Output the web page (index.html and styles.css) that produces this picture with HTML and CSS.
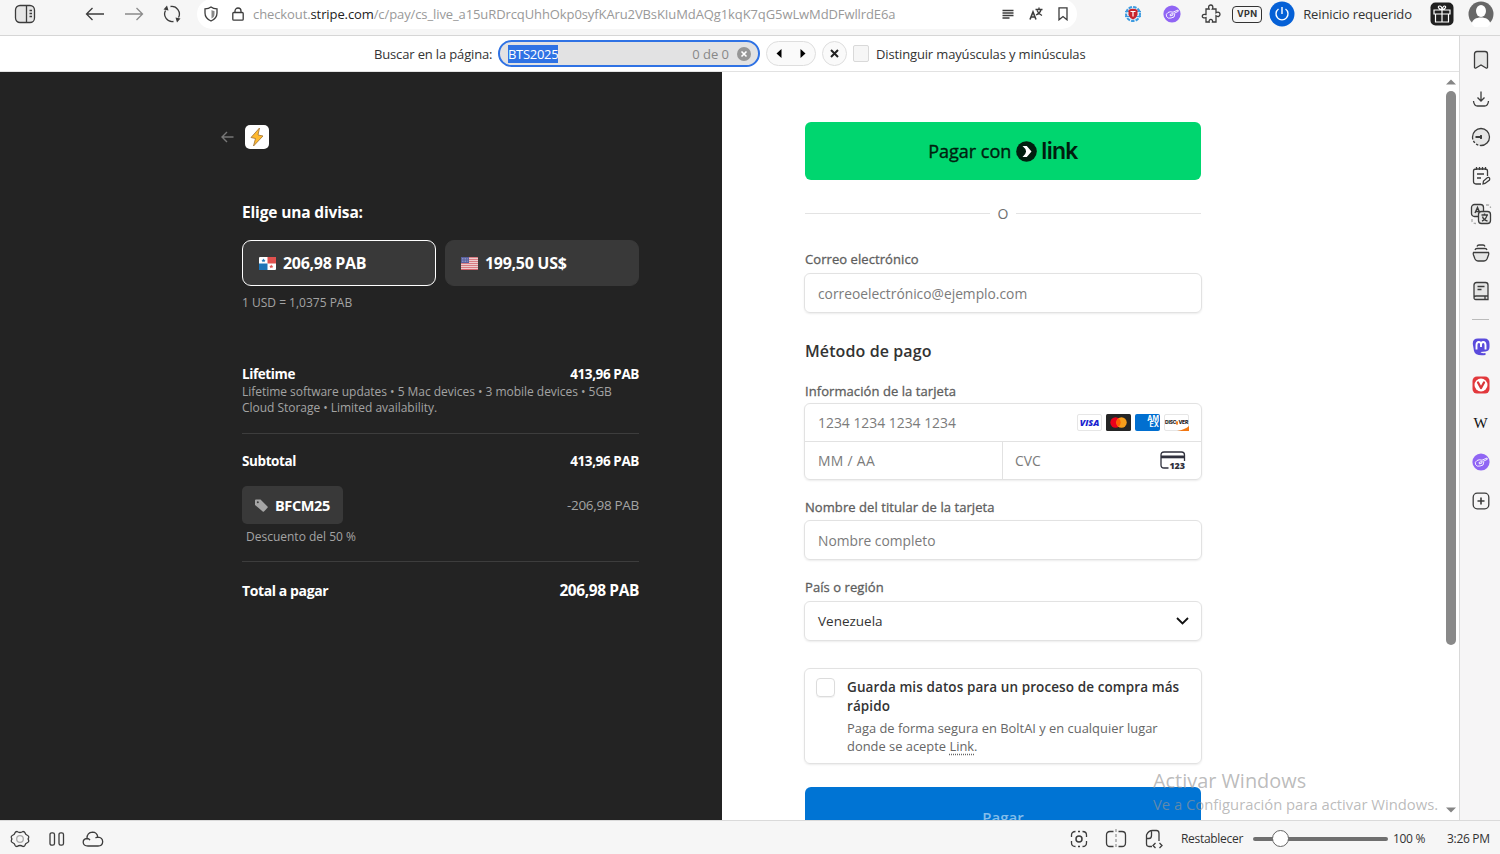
FILE: index.html
```html
<!DOCTYPE html>
<html lang="es">
<head>
    <meta charset="utf-8">
    <title>Checkout</title>
    <link rel="stylesheet" href="styles.css">
</head>
<body>
    <div class="toolbar">
        <svg class="ic panel-ic" width="22" height="20" viewBox="0 0 22 20"><rect class="tint" x="1.500" y="1.500" width="19" height="17" rx="4.500"/><path d="M12.500 2v16M15.500 6.500h2.500M15.500 9.500h2.500M15.500 12.500h2.500"/></svg>
        <svg class="ic back-ic" width="20" height="16" viewBox="0 0 20 16"><path d="M19 8H1.500M7.500 2L1.500 8l6 6"/></svg>
        <svg class="ic forward-ic" width="20" height="16" viewBox="0 0 20 16"><path d="M1 8h17.500M12.500 2l6 6-6 6"/></svg>
        <svg class="ic reload-ic" width="18" height="18" viewBox="0 0 18 18"><path d="M7.500 1.500A7.600 7.600 0 0 1 15.500 12.500M10.500 16.500A7.600 7.600 0 0 1 2.500 5.500"/><path class="fill" d="M12.500 12.500l1.500 5 3.500-4zM5.500 5.500L4 .5.5 4.500z"/></svg>
        <div class="address">
            <svg class="ic" width="14" height="16" viewBox="0 0 14 16"><path d="M1 2.800C3.500 2.800 5.500 2.200 7 1c1.500 1.200 3.500 1.800 6 1.800V7c0 4-2.500 6.500-6 8C3.500 13.500 1 11 1 7z"/><path class="shade" d="M7.500 4c1 .6 2 .9 3 1v3c0 2.500-1.300 3.700-3 4.600z"/></svg>
            <svg class="ic lock-ic" width="12" height="14" viewBox="0 0 12 14"><rect x=".8" y="5.500" width="10.400" height="7.700" rx="1"/><path d="M3 5.500V4a3 3 0 0 1 6 0v1.500"/></svg>
            <span class="url">checkout.<b>stripe.com</b>/c/pay/cs_live_a15uRDrcqUhhOkp0syfKAru2VBsKIuMdAQg1kqK7qG5wLwMdDFwllrdE6a</span>
            <svg class="ic reader-ic" width="12" height="10" viewBox="0 0 12 10"><path d="M.5 1.500h11M.5 4h11M.5 6.500h11M.5 9h7"/></svg>
            <svg class="ic" width="14" height="14" viewBox="0 0 14 14"><path d="M1 12.500L4 5l3 7.500M2 10h4" stroke-width="1.600"/><path d="M6.500 2.500h7M10 .5v2M12 2.500C11.500 5 9.500 7 7 8M8 3.500c.8 2 2.500 3.800 5 5"/></svg>
            <svg class="ic" width="10" height="14" viewBox="0 0 10 14"><path d="M1 .8h8v12L5 9.500L1 12.800z"/></svg>
        </div>
        <svg class="globe-ic" width="18" height="18" viewBox="0 0 18 18"><circle cx="9" cy="9" r="7" fill="#d9ecfb" stroke="#3d9be0" stroke-width="2" stroke-dasharray="3.500 1.200"/><path d="M1 6.500h16M1 11.500h16" stroke="#3d9be0"/><path d="M4.500 5Q9 2.500 13.500 5v5Q12 13.500 9 14.500 6 13.500 4.500 10z" fill="#c9252d"/><path d="M6.500 6.500h5M9 6.500v5" stroke="#fff" stroke-width="1.200"/></svg>
        <svg class="hand-ic" width="18" height="18" viewBox="0 0 18 18"><circle cx="9" cy="9" r="8.600" fill="#9065f4"/><path d="M15 5l-5 2.200q-3-1-5 .3Q2.500 9 3.500 11.500q1.500 2.500 4.500 1.500l3-1 .8-3M15 5l.3 1.300-5 2.500M7 9.500l2.500-1 .5 1.500-2.500 1z" fill="none" stroke="#fff" stroke-width=".9"/></svg>
        <svg class="ic puzzle-ic" width="20" height="20" viewBox="0 0 20 20"><path d="M5 5h3.200C6.800 2.700 8 1 9.700 1s3 1.700 1.600 4H15v3.800c2.200-1.500 4-.3 4 1.500s-1.800 3-4 1.500V18h-3.500c1-3.500-4.300-3.500-3.300 0H5v-4.300c-5 1.500-5-4.500 0-3.200z"/></svg>
        <span class="vpn">VPN</span>
        <svg class="power-ic" width="26" height="26" viewBox="0 0 26 26"><circle cx="13" cy="13" r="12.500" fill="#0560d6"/><path d="M9.500 8a6 6 0 1 0 7 0M13 6v7" fill="none" stroke="#fff" stroke-width="1.400"/></svg>
        <span class="restart">Reinicio requerido</span>
        <svg class="gift-ic" width="24" height="24" viewBox="0 0 24 24"><rect x=".5" y=".5" width="23" height="23" rx="5" fill="#202020"/><path d="M4 8h16v4H4zM5.500 12h13v8h-13zM12 8v12M12 7.500C8 7.500 7.500 4 9.500 4S12 6 12 7.500s.5-3.500 2.500-3.500S16 7.500 12 7.500" fill="none" stroke="#fff" stroke-width="1.200"/></svg>
        <svg class="avatar-ic" width="26" height="26" viewBox="0 0 26 26"><circle cx="13" cy="13" r="12.500" fill="#686868"/><path d="M3.500 23c1-4.500 4.500-6.500 9.500-6.500s8.500 2 9.500 6.500l-3 3h-13z" fill="#fff"/><ellipse cx="13" cy="10" rx="5" ry="6" fill="#fff"/></svg>
    </div>

    <div class="middle">
        <div class="window">
            <div class="findbar">
                <span class="find-label">Buscar en la página:</span>
                <div class="find-input">
                    <span class="selected">BTS2025</span>
                    <span class="count">0 de 0</span>
                    <svg width="14" height="14" viewBox="0 0 14 14"><circle cx="7" cy="7" r="7" fill="#969696"/><path d="M4.500 4.500l5 5M9.500 4.500l-5 5" stroke="#fff" stroke-width="1.600"/></svg>
                </div>
                <div class="find-nav">
                    <svg width="6" height="9" viewBox="0 0 6 9"><path d="M5.500 0v9L.5 4.500z"/></svg>
                    <svg width="6" height="9" viewBox="0 0 6 9"><path d="M.5 0v9l5-4.500z"/></svg>
                </div>
                <div class="find-close">
                    <svg width="9" height="9" viewBox="0 0 9 9"><path d="M1 1l7 7M8 1L1 8" stroke="#222" stroke-width="2"/></svg>
                </div>
                <span class="find-check"></span>
                <span class="find-case">Distinguir mayúsculas y minúsculas</span>
            </div>

            <div class="page">
                <div class="summary">
                    <div class="merchant">
                        <svg width="13" height="12" viewBox="0 0 13 12"><path d="M12.500 6H1M6 1L1 6l5 5" fill="none" stroke="#777" stroke-width="1.400"/></svg>
                        <span class="logo"><svg width="16" height="20" viewBox="0 0 16 20"><path d="M10.500 1L2 10.500l4.500 1L4.500 19L14 9l-5-1z" fill="#ffb92e" stroke="#a77b3c" stroke-width=".9"/></svg></span>
                    </div>
                    <h2 class="choose">Elige una divisa:</h2>
                    <div class="currencies">
                        <div class="currency active">
                            <svg width="17" height="13" viewBox="0 0 17 13"><rect width="17" height="13" rx="1" fill="#fff"/><path d="M8.500 0H17v6.500H8.500z" fill="#e0514e"/><path d="M0 6.500h8.500V13H0z" fill="#1d74b7"/><path d="M4.500 1.500l.6 1.300 1.400.1-1 1 .3 1.400-1.300-.7-1.300.7.300-1.400-1-1 1.400-.1z" fill="#1d74b7"/><path d="M12.300 7.500l.6 1.300 1.400.1-1 1 .3 1.400-1.300-.7-1.300.7.300-1.400-1-1 1.400-.1z" fill="#e0514e"/></svg>
                            206,98 PAB
                        </div>
                        <div class="currency">
                            <svg width="17" height="13" viewBox="0 0 17 13"><rect width="17" height="13" rx="1" fill="#f3e5e5"/><path d="M0 .7h17M0 2.700h17M0 4.700h17M0 6.700h17M0 8.700h17M0 10.700h17M0 12.500h17" stroke="#d2636c"/><path d="M0 0h8v6H0z" fill="#59609f"/><path d="M1 1.500h6.500M1 3h6.500M1 4.500h6.500" stroke="#b5b8d8" stroke-width=".7" stroke-dasharray=".8 .8"/></svg>
                            199,50 US$
                        </div>
                    </div>
                    <p class="rate">1 USD = 1,0375 PAB</p>

                    <div class="line lifetime"><span>Lifetime</span><span>413,96 PAB</span></div>
                    <p class="desc">Lifetime software updates • 5 Mac devices • 3 mobile devices • 5GB<br>Cloud Storage • Limited availability.</p>
                    <div class="line subtotal"><span>Subtotal</span><span>413,96 PAB</span></div>
                    <div class="line coupon">
                        <span class="tag">
                            <svg width="13" height="13" viewBox="0 0 13 13"><path d="M0 1.500Q0 .5 1 .5h4.500L12.500 7.500q.6.700 0 1.300L9 12.400q-.7.500-1.300 0L0 6z" fill="#a5a5a5"/><circle cx="2.800" cy="3.200" r="1" fill="#3a3a3a"/></svg>
                            BFCM25
                        </span>
                        <span class="minus">-206,98 PAB</span>
                    </div>
                    <p class="discount">Descuento del 50 %</p>
                    <div class="line total"><span>Total a pagar</span><span class="amount">206,98 PAB</span></div>
                </div>

                <div class="payment">
                    <div class="form">
                        <div class="link-button">
                            <span class="pay-with">Pagar con</span>
                            <svg width="21" height="21" viewBox="0 0 21 21"><circle cx="10.500" cy="10.500" r="10.300" fill="#011e0f"/><path d="M6.500 5h4.300l4.700 5.500-4.700 5.500H6.500q3.300-2.500 3.600-5.500Q9.800 7.500 6.500 5z" fill="#fff"/></svg>
                            <span class="link-word">link</span>
                        </div>
                        <div class="or"><span>O</span></div>
                        <label class="label">Correo electrónico</label>
                        <div class="field">correoelectrónico@ejemplo.com</div>
                        <h2 class="method">Método de pago</h2>
                        <label class="label">Información de la tarjeta</label>
                        <div class="card">
                            <div class="card-number">
                                <span>1234 1234 1234 1234</span>
                                <div class="brands">
                                    <span class="brand visa">VISA</span>
                                    <svg width="25" height="17" viewBox="0 0 25 17"><rect width="25" height="17" rx="1.500" fill="#252525"/><circle cx="9.500" cy="8.500" r="5.200" fill="#eb001b"/><circle cx="15.500" cy="8.500" r="5.200" fill="#f79e1b"/><path d="M12.500 4.300a5.200 5.200 0 0 1 0 8.400 5.200 5.200 0 0 1 0-8.400" fill="#ff5f00"/></svg>
                                    <span class="brand amex"><span>AM</span><span>EX</span></span>
                                    <span class="brand discover">DISC<i></i>VER<svg width="12" height="5" viewBox="0 0 12 5"><path d="M12 0v5H0Q8 3.500 12 0z" fill="#f27712"/></svg></span>
                                </div>
                            </div>
                            <div class="card-row">
                                <div class="expiry">MM / AA</div>
                                <div class="cvc">
                                    CVC
                                    <svg width="26" height="21" viewBox="0 0 26 21"><path d="M8.500 18H4q-3 0-3-3V5q0-3 3-3h17.500q3 0 3 3v6" fill="none" stroke="#30313d" stroke-width="1.300"/><path d="M1 5.500h23.500v2.800H1z" fill="#30313d"/><text class="cvc-digits" x="9.500" y="18.500" textLength="15.500">123</text></svg>
                                </div>
                            </div>
                        </div>
                        <label class="label holder">Nombre del titular de la tarjeta</label>
                        <div class="field">Nombre completo</div>
                        <label class="label country">País o región</label>
                        <div class="field select">
                            Venezuela
                            <svg width="13" height="8" viewBox="0 0 13 8"><path d="M1 1l5.500 5.500L12 1" fill="none" stroke="#111" stroke-width="1.800"/></svg>
                        </div>
                        <div class="save">
                            <span class="checkbox"></span>
                            <div>
                                <p class="save-title">Guarda mis datos para un proceso de compra más<br>rápido</p>
                                <p class="save-text">Paga de forma segura en BoltAI y en cualquier lugar<br>donde se acepte <u>Link</u>.</p>
                            </div>
                        </div>
                        <div class="pay-button">Pagar</div>
                    </div>
                </div>

                <div class="scrollbar">
                    <svg width="10" height="6" viewBox="0 0 10 6"><path d="M0 5.500L5 .5l5 5z"/></svg>
                    <div class="thumb"></div>
                    <svg class="down" width="10" height="6" viewBox="0 0 10 6"><path d="M0 .5l5 5 5-5z"/></svg>
                </div>
            </div>
        </div>

        <div class="sidepanel">
            <svg class="ic" width="20" height="20" viewBox="0 0 20 20"><path class="tint" d="M3.500 4q0-2.500 2.500-2.500h8q2.500 0 2.500 2.500v13.500q-.5 1-1.500.5L10 15l-5 3q-1 .5-1.500-.5z"/></svg>
            <svg class="ic" width="20" height="20" viewBox="0 0 20 20"><path d="M10 2.500v9M6.500 8.500L10 12l3.500-3.500M2.500 12q.5 5 4 5h7q3.500 0 4-5"/></svg>
            <svg class="ic" width="20" height="20" viewBox="0 0 20 20"><circle class="tint-only" cx="10" cy="10" r="8.500"/><path d="M1.500 10A8.500 8.500 0 1 1 10 18.500"/><path d="M1.500 10a8.500 8.500 0 0 0 8.500 8.500" stroke-dasharray="2.500 1.500"/><path d="M4.500 10H11M10 8v4" stroke-width="1.800"/></svg>
            <svg class="ic" width="20" height="20" viewBox="0 0 20 20"><path d="M10 18H5q-2.500 0-2.500-2.500V5Q2.500 3 5 3h9q2.500 0 2.500 2v5M5.500 1v3M8.500 1v3M11.500 1v3M14.500 1v3M6 8h7M6 12h4M12 18l.5-3 4-3.500q1.500-.5 2 .5t0 2L14 17.500z"/></svg>
            <svg class="ic" width="22" height="22" viewBox="0 0 22 22"><rect class="tint" x="1.500" y="1.500" width="12" height="12" rx="3"/><rect class="tint" x="8.500" y="8.500" width="12" height="12" rx="3"/><path d="M5 10L7.500 4.500 9.500 9M6 8.500h3M11.500 12h6.500M14.500 10.500V12M17 12c-.5 3-2.500 5-5 6M12.500 13.500c.5 2 2.500 4 5 4.500" stroke-width="1.400"/><path d="M16 2h2q2.500 0 2.500 3M2 16v2q0 2.500 4 2.500" stroke="#aaa" stroke-dasharray="3 2"/></svg>
            <svg class="ic" width="20" height="20" viewBox="0 0 20 20"><path class="tint" d="M2.500 9.500h15q.5 1 0 2.500l-1.500 4q-1 2-3 2H7q-2 0-3-2l-1.500-4q-.5-1.500 0-2.500z"/><path d="M4 7q.5-1.500 2-1.500h8q1.500 0 2 1.500M6 3.500Q6.500 2 8 2h4q1.500 0 2 1.500"/></svg>
            <svg class="ic" width="20" height="20" viewBox="0 0 20 20"><path class="tint" d="M3 16V4q0-2.500 2.500-2.500h9Q17 1.500 17 4v11H5q-2 0-2 1.800T5 18.500h12V15"/><path d="M6.500 5.500h7M6.500 8.500h4M14 15v3"/></svg>
            <span class="divider"></span>
            <svg width="18" height="18" viewBox="0 0 18 18"><path d="M17.500 6v3q0 4-4 4.500l-5 .5q0 1.500 5 1v2q-10 1.500-11.500-4L.8 6Q.5.500 6 .5h6.500q5 0 5 5.500z" fill="#5b4bdc"/><path d="M4.500 11.500V7q0-3 2.300-3T9 7v2-2q0-3 2.200-3t2.300 3v4.500" fill="none" stroke="#fff" stroke-width="1.900"/></svg>
            <svg width="18" height="18" viewBox="0 0 18 18"><rect x=".5" y=".5" width="17" height="17" rx="4.500" fill="#e2383c"/><circle cx="9" cy="9" r="6.500" fill="#fff"/><path d="M6 6.500L9 12l3-5.500" fill="none" stroke="#d9373b" stroke-width="2.300" stroke-linecap="round" stroke-linejoin="round"/></svg>
            <span class="wiki">W</span>
            <svg width="18" height="18" viewBox="0 0 18 18"><circle cx="9" cy="9" r="8.600" fill="#9065f4"/><path d="M15 5l-5 2.200q-3-1-5 .3Q2.500 9 3.500 11.500q1.500 2.500 4.500 1.500l3-1 .8-3M15 5l.3 1.300-5 2.500M7 9.500l2.500-1 .5 1.500-2.500 1z" fill="none" stroke="#fff" stroke-width=".9"/></svg>
            <svg class="ic" width="18" height="18" viewBox="0 0 18 18"><rect x="1.200" y="1.200" width="15.600" height="15.600" rx="4"/><path d="M9 5.500v7M5.500 9h7" stroke-width="1.600"/></svg>
        </div>
    </div>

    <div class="statusbar">
        <svg class="ic" width="20" height="18" viewBox="0 0 20 18"><path stroke-linejoin="round" d="M7 1.500q1.500 1 3 1t3-1q1.500 0 2 1.300.3 1.700 2.700 2.700 1.300.5 1 2-1.200 1.500 0 3 .3 1.500-1 2-2.400 1-2.700 2.700-.5 1.300-2 1.300-1.500-1-3-1t-3 1q-1.500 0-2-1.300-.3-1.700-2.700-2.700-1.300-.5-1-2 1.200-1.500 0-3-.3-1.500 1-2Q4.700 4.500 5 2.800 5.500 1.500 7 1.500z"/><circle cx="10" cy="9" r="3.300" stroke="#aaa"/></svg>
        <svg class="ic" width="16" height="14" viewBox="0 0 16 14"><rect x="1" y=".8" width="4.500" height="12.400" rx="1.800"/><rect x="10" y=".8" width="4.500" height="12.400" rx="1.800"/></svg>
        <svg class="ic cloud-ic" width="22" height="16" viewBox="0 0 22 16"><path d="M6 15Q1.500 15 1.200 11.500 1 8 5 7.500 5 1.500 10.500 1.200q4.500 0 5.300 5 4.700.3 4.900 4.500Q20.500 15 16 15zM5 7.500q2 0 3 1.700M15.800 6.200q-1.300 0-2.300.8"/></svg>
        <div class="status-right">
            <svg class="ic" width="18" height="18" viewBox="0 0 18 18"><path d="M1.500 7V5q0-3.500 4-3.500M12.500 1.500q4 0 4 3.500v2M16.500 11v2q0 3.500-4 3.500M5.500 16.500q-4 0-4-3.500v-2M8 1.500h2M8 16.500h2"/><circle cx="9" cy="9" r="3" stroke-width="1.500"/></svg>
            <svg class="ic split-ic" width="22" height="22" viewBox="0 0 22 22"><path d="M8.500 3.500H5q-3.500 0-3.500 3.500v8q0 3.500 3.500 3.500h3.500M13.500 3.500H17q3.500 0 3.500 3.500v8q0 3.500-3.500 3.500h-3.500"/><path d="M11 1v20" stroke="#999" stroke-dasharray="3 2"/></svg>
            <svg class="ic" width="18" height="20" viewBox="0 0 18 20"><path d="M7 17.500H4q-2.500 0-2.500-2.500V6q2-4.500 6-4.500h4q2.500 0 2.500 3V12M1.500 9.500H4q2.500 0 2.500-3v-5M10.500 14L8 16.500l2.500 2.500M14.500 14l2.500 2.500-2.500 2.500"/></svg>
            <span class="reset">Restablecer</span>
            <div class="slider"><span class="knob"></span></div>
            <span class="zoom">100 %</span>
            <span class="clock">3:26 PM</span>
        </div>
    </div>

    <div class="watermark">
        <p class="wm-title">Activar Windows</p>
        <p class="wm-text">Ve a Configuración para activar Windows.</p>
    </div>
</body>
</html>
```

FILE: styles.css
```css
* {
    box-sizing: border-box;
}
body {
    margin: 0;
    width: 1500px;
    height: 854px;
    overflow: hidden;
    display: flex;
    flex-direction: column;
    font-family: "Open Sans", "Noto Sans", sans-serif;
    font-size: 13px;
    color: #333;
    background: #fff;
}
p, h2 {
    margin: 0;
}
svg {
    display: block;
    flex: none;
}
span, label {
    white-space: nowrap;
}
.ic {
    fill: none;
    stroke: #3c3c3c;
    stroke-width: 1.3;
}
.ic .fill {
    fill: #3c3c3c;
    stroke: none;
}
.ic .shade {
    fill: #888;
    stroke: none;
}
.ic .tint {
    fill: #e6e6e6;
}
.ic .tint-only {
    fill: #e6e6e6;
    stroke: none;
}

/* browser toolbar */
.toolbar {
    flex: none;
    height: 36px;
    padding: 0 6px 7px 14px;
    display: flex;
    align-items: center;
    background: #f6f6f6;
    border-bottom: 1px solid #d6d6d6;
}
.back-ic {
    margin-left: 49px;
}
.forward-ic {
    margin-left: 19px;
    stroke: #8b8b8b;
}
.reload-ic {
    margin-left: 19px;
}
.address {
    width: 882px;
    height: 30px;
    margin-left: 16px;
    padding: 0 9px 0 7px;
    display: flex;
    align-items: center;
    gap: 15px;
    background: #fff;
    border-radius: 15px;
}
.lock-ic {
    margin-left: -1px;
}
.url {
    flex: 1;
    margin-left: -6px;
    color: #999;
    letter-spacing: -0.1px;
}
.url b {
    font-weight: 400;
    color: #222;
}
.globe-ic {
    margin-left: 47px;
}
.hand-ic {
    margin-left: 21px;
}
.puzzle-ic {
    margin-left: 20px;
}
.vpn {
    width: 30px;
    height: 17px;
    margin-left: 11px;
    border: 1.5px solid #333;
    border-radius: 4px;
    font: bold 9px/14px "Inter", sans-serif;
    letter-spacing: 0.4px;
    text-align: center;
}
.power-ic {
    margin-left: 7px;
}
.restart {
    width: 110px;
    margin-left: 8px;
    letter-spacing: -0.12px;
}
.gift-ic {
    margin-left: 17px;
}
.avatar-ic {
    margin-left: 14px;
}

.middle {
    height: 784px;
    display: flex;
}
.window {
    width: 1459px;
    display: flex;
    flex-direction: column;
}

/* find in page */
.findbar {
    flex: none;
    height: 36px;
    padding-left: 374px;
    display: flex;
    align-items: center;
    border-bottom: 1px solid #e2e2e2;
}
.find-label {
    width: 124px;
    letter-spacing: -0.15px;
}
.find-input {
    width: 262px;
    height: 27px;
    padding: 0 7px 0 8px;
    display: flex;
    align-items: center;
    background: #e2e2e3;
    border: 2px solid #2f72e4;
    border-radius: 14px;
}
.selected {
    color: #fff;
    background: #2f72e4;
    line-height: 18px;
    letter-spacing: -0.3px;
}
.count {
    margin: 0 8px 0 auto;
    color: #888;
}
.find-nav, .find-close {
    height: 25px;
    display: flex;
    align-items: center;
    justify-content: center;
    background: #fafafa;
    border: 1px solid #dedede;
    border-radius: 13px;
}
.find-nav {
    width: 50px;
    margin-left: 6px;
    gap: 18px;
}
.find-close {
    width: 25px;
    margin-left: 6px;
}
.find-check {
    width: 16px;
    height: 17px;
    margin: 0 7px 0 6px;
    background: #f6f6f6;
    border: 1px solid #d9d9d9;
    border-radius: 2px;
}
.find-case {
    letter-spacing: -0.14px;
}

/* checkout page */
.page {
    height: 748px;
    display: flex;
    overflow: hidden;
}
.summary {
    width: 722px;
    padding: 52px 83px 0 242px;
    background: #232323;
    color: #fff;
}
.merchant {
    height: 26px;
    margin-left: -21px;
    display: flex;
    align-items: center;
    gap: 11px;
}
.logo {
    width: 24px;
    height: 24px;
    display: flex;
    align-items: center;
    justify-content: center;
    background: #fff;
    border-radius: 5px;
}
.choose {
    margin-top: 50px;
    font-size: 15.5px;
    line-height: 24px;
    font-weight: 700;
    letter-spacing: -0.15px;
}
.currencies {
    margin-top: 16px;
    display: flex;
    gap: 9px;
}
.currency {
    width: 194px;
    height: 46px;
    padding-left: 15px;
    display: flex;
    align-items: center;
    gap: 7px;
    background: #393939;
    border: 1px solid #393939;
    border-radius: 9px;
    font-size: 16px;
    font-weight: 700;
    letter-spacing: -0.3px;
}
.currency.active {
    padding-left: 16px;
    border-color: #fff;
}
.rate {
    margin-top: 8px;
    font-size: 12px;
    line-height: 17px;
    color: #a3a3a3;
}
.line {
    display: flex;
    justify-content: space-between;
    align-items: center;
    font-size: 13.5px;
    font-weight: 700;
    letter-spacing: -0.4px;
}
.lifetime {
    height: 20px;
    margin-top: 53px;
}
.desc {
    padding-bottom: 17px;
    font-size: 12px;
    line-height: 16px;
    color: #a3a3a3;
    letter-spacing: -0.03px;
    white-space: nowrap;
    border-bottom: 1px solid #3d3d3d;
}
.subtotal {
    height: 20px;
    margin-top: 17px;
}
.coupon {
    height: 38px;
    margin-top: 15px;
}
.tag {
    width: 101px;
    height: 38px;
    padding-left: 13px;
    display: flex;
    align-items: center;
    gap: 7px;
    background: #393939;
    border-radius: 5px;
    font-size: 14.5px;
}
.minus {
    color: #a3a3a3;
    font-weight: 400;
    letter-spacing: -0.3px;
}
.discount {
    padding: 4px 0 16px 4px;
    font-size: 12px;
    line-height: 17px;
    color: #a3a3a3;
    border-bottom: 1px solid #3d3d3d;
}
.total {
    height: 24px;
    margin-top: 16px;
    font-size: 14px;
}
.amount {
    font-size: 15.5px;
}

.payment {
    width: 724px;
    padding: 50px 0 0 82px;
}
.form {
    width: 398px;
}
.link-button {
    height: 58px;
    margin: 0 1px;
    display: flex;
    align-items: center;
    justify-content: center;
    background: #00d66f;
    border-radius: 6px;
    color: #011e0f;
}
.pay-with {
    margin-right: 5px;
    font-size: 18px;
    -webkit-text-stroke: 0.4px #011e0f;
}
.link-word {
    margin-left: 4px;
    font: 600 23px/30px "Inter", sans-serif;
    letter-spacing: -0.7px;
}
.or {
    height: 18px;
    margin: 24px 1px 28px;
    display: flex;
    align-items: center;
    gap: 8px;
    font-size: 14px;
    color: #6f6f6f;
}
.or::before, .or::after {
    content: "";
    flex: 1;
    height: 1px;
    background: #e3e3e3;
}
.label {
    display: block;
    height: 18px;
    margin: 0 1px 5px;
    font-size: 13px;
    line-height: 18px;
    color: #5e5e5e;
    letter-spacing: 0.07px;
    -webkit-text-stroke: 0.3px #5e5e5e;
}
.field {
    height: 40px;
    padding: 0 12px 0 13px;
    display: flex;
    align-items: center;
    justify-content: space-between;
    border: 1px solid #e2e2e2;
    border-radius: 6px;
    box-shadow: 0 1px 2px rgba(0, 0, 0, 0.08);
    font-size: 13.8px;
    color: #7b7b7b;
}
.method {
    margin: 26px 1px 19px;
    font-size: 16px;
    line-height: 24px;
    font-weight: 600;
    color: #333;
    letter-spacing: 0.1px;
}
.card {
    height: 77px;
    margin-top: -2px;
    border: 1px solid #e2e2e2;
    border-radius: 6px;
    box-shadow: 0 1px 2px rgba(0, 0, 0, 0.08);
    font-size: 13.9px;
    color: #7b7b7b;
}
.card-number {
    height: 38px;
    padding: 0 12px 0 13px;
    display: flex;
    align-items: center;
    justify-content: space-between;
    border-bottom: 1px solid #e2e2e2;
}
.brands {
    display: flex;
    gap: 4px;
}
.brand {
    width: 25px;
    height: 17px;
    border-radius: 2px;
    text-align: center;
}
.visa {
    border: 1px solid #e6e6e6;
    font: italic 800 9px/15px "Open Sans", sans-serif;
    color: #1a1fd0;
}
.amex {
    padding: 2px 1px 0 0;
    display: flex;
    flex-direction: column;
    align-items: flex-end;
    background: #016fd0;
    font: bold 7px/6px "Inter", sans-serif;
    color: #fff;
}
.discover {
    position: relative;
    display: flex;
    align-items: center;
    justify-content: center;
    border: 1px solid #e6e6e6;
    font: 800 5px/15px "Inter", sans-serif;
    letter-spacing: -0.2px;
    color: #222;
}
.discover i {
    width: 4px;
    height: 4px;
    background: #f27712;
    border-radius: 50%;
}
.discover svg {
    position: absolute;
    right: -1px;
    bottom: -1px;
}
.card-row {
    height: 37px;
    display: flex;
}
.expiry {
    width: 198px;
    padding-left: 13px;
    line-height: 38px;
    letter-spacing: 0.3px;
    border-right: 1px solid #e2e2e2;
}
.cvc {
    flex: 1;
    padding: 0 15px 0 12px;
    display: flex;
    align-items: center;
    justify-content: space-between;
}
.cvc-digits {
    font: 800 9px "Open Sans", sans-serif;
    fill: #30313d;
}
.holder {
    margin-top: 18px;
    margin-bottom: 4px;
}
.country {
    margin-top: 18px;
}
.select {
    color: #333;
    font-size: 13.5px;
}
.save {
    height: 96px;
    margin-top: 27px;
    padding: 9px 12px 0 11px;
    display: flex;
    gap: 12px;
    border: 1px solid #e2e2e2;
    border-radius: 6px;
    box-shadow: 0 1px 2px rgba(0, 0, 0, 0.08);
    white-space: nowrap;
}
.checkbox {
    width: 19px;
    height: 19px;
    border: 1px solid #dcdcdc;
    border-radius: 4px;
    box-shadow: 0 1px 1px rgba(0, 0, 0, 0.06);
}
.save-title {
    font-size: 13.5px;
    line-height: 19px;
    font-weight: 600;
    letter-spacing: 0.09px;
}
.save-text {
    margin-top: 3px;
    font-size: 12.9px;
    line-height: 18px;
    color: #666;
}
.save-text u {
    text-decoration: underline dotted;
    text-underline-offset: 3px;
}
.pay-button {
    height: 58px;
    margin: 23px 1px 0;
    background: #0074d4;
    border-radius: 6px;
    font-size: 15px;
    line-height: 60px;
    font-weight: 600;
    color: #83bdea;
    text-align: center;
}
.scrollbar {
    width: 10px;
    padding: 7px 0;
    display: flex;
    flex-direction: column;
    align-items: center;
    fill: #858585;
}
.thumb {
    width: 10px;
    height: 554px;
    margin-top: 6px;
    background: #898989;
    border-radius: 5px;
}
.down {
    margin-top: auto;
}

/* side panel */
.sidepanel {
    width: 41px;
    padding: 5px 0 0 1px;
    display: grid;
    grid-template-rows: repeat(7, 38.5px) 17px repeat(5, 38.5px);
    align-content: start;
    align-items: center;
    justify-items: center;
    background: #f6f5f6;
    border-left: 1px solid #d9d9d9;
}
.divider {
    width: 17px;
    height: 1px;
    background: #bbb;
}
.wiki {
    font: 15px "Liberation Serif", serif;
    color: #111;
}

/* status bar */
.statusbar {
    flex: none;
    height: 34px;
    padding: 2px 10px 0;
    display: flex;
    align-items: center;
    gap: 19px;
    background: #f6f6f6;
    border-top: 1px solid #dadada;
    font-size: 12px;
    letter-spacing: -0.3px;
}
.cloud-ic {
    margin-left: -2px;
}
.status-right {
    margin-left: auto;
    display: flex;
    align-items: center;
    gap: 18px;
}
.split-ic {
    margin-left: -1px;
}
.reset {
    width: 61px;
}
.slider {
    width: 135px;
    height: 4px;
    margin-left: -7px;
    background: #6f6f6f;
    border-radius: 2px;
}
.knob {
    display: block;
    width: 17px;
    height: 17px;
    margin: -6.5px 0 0 19px;
    background: #fff;
    border: 1.5px solid #666;
    border-radius: 50%;
}
.zoom {
    width: 33px;
    margin-left: -13px;
}
.clock {
    width: 43px;
    margin-left: 3px;
}

.watermark {
    position: absolute;
    left: 1153px;
    top: 767px;
    color: rgba(150, 150, 150, 0.65);
    white-space: nowrap;
}
.wm-title {
    font-size: 19.9px;
    line-height: 27px;
}
.wm-text {
    font-size: 14.8px;
    line-height: 20px;
}
```
